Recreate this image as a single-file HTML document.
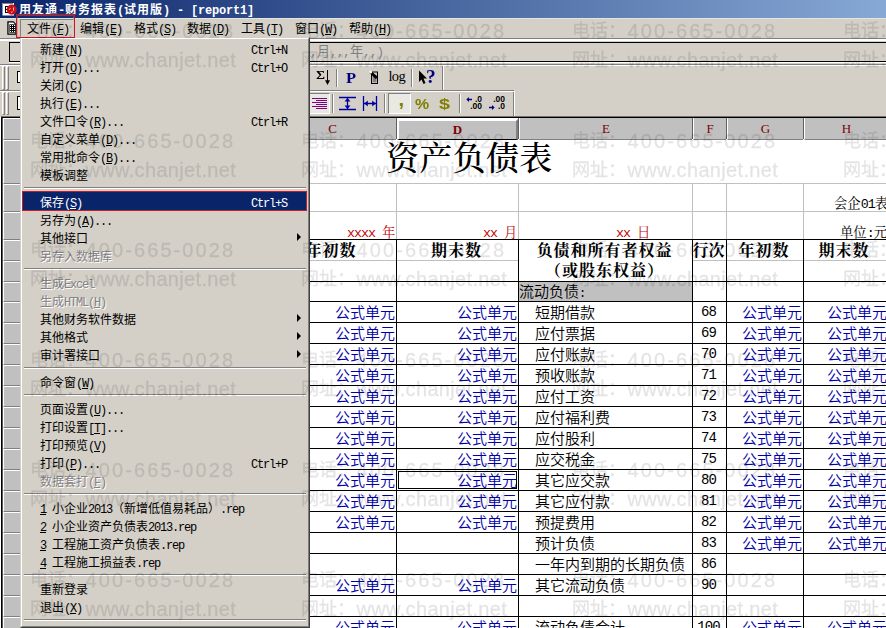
<!DOCTYPE html>
<html lang="zh-CN"><head><meta charset="utf-8"><title>用友通-财务报表</title>
<style>
*{box-sizing:border-box;margin:0;padding:0}
html,body{width:886px;height:628px;overflow:hidden;background:#d4d0c8}
body{position:relative;font-family:"Liberation Sans","Noto Sans CJK SC",sans-serif;font-size:12px;color:#000;line-height:1}
.abs,.abs *{position:absolute}
div{position:absolute;white-space:nowrap}
span{position:static}
.a{font-family:"Liberation Mono","Noto Sans CJK SC",monospace;letter-spacing:-1.2px;font-size:12px}
.u{text-decoration:underline}
#title{left:0;top:0;width:886px;height:18px;background:linear-gradient(90deg,#0a246a 0px,#a6caf0 1107px)}
#title .t{left:19px;top:3px;color:#fff;font-weight:bold;font-size:12px;letter-spacing:1px;line-height:14px}
#title .t .a{letter-spacing:-0.2px;font-weight:bold}
#menubar{left:0;top:18px;width:886px;height:20px;background:#d4d0c8;border-top:1px solid #e6e4e0}
.mi{top:4px;height:14px;line-height:14px}
/* dropdown */
#dd{left:20px;top:37px;width:290px;height:591px;background:#d4d0c8;border:1px solid;border-color:#d4d0c8 #404040 #404040 #d4d0c8}
#dd .in{left:0;top:0;width:288px;height:589px;border:1px solid;border-color:#fff #808080 #808080 #fff}
.it{left:23px;width:283px;height:18px;line-height:18px}
.it .l{left:17px;top:2px}
.it .r{left:228px;top:2px}
.it .ar{left:274px;top:5px;width:0;height:0;border:4px solid transparent;border-left:4px solid #000;border-right:none}
.dis{color:#848284;text-shadow:1px 1px 0 #fff}
.sep{left:24px;width:282px;height:2px;border-top:1px solid #808080;border-bottom:1px solid #fff}
.hl{background:#0a246a;color:#fff;outline:1px solid #c41c2c}
/* sheet */
#sheet{left:0;top:117px;width:886px;height:511px;background:#fff}
.ch{top:118px;height:22px;background:#c0c0c0;border-left:1px solid #fff;border-bottom:1px solid #808080;color:#800000;font-family:"Liberation Serif",serif;font-size:13px;text-align:center;line-height:21px}
.chs{background:#606060;top:118px;width:1px;height:21px}
.rh{left:3px;width:24px;background:#c0c0c0;border:1px solid;border-color:#fff #808080 #808080 #fff}
.gl{background:#c0c0c0}
.bl{background:#000}
.cell{font-size:15px;line-height:21px;height:21px;font-family:"Liberation Sans","Noto Sans CJK SC",sans-serif;font-weight:350}
.f{color:#0000a8;text-align:right}
.n{font-family:"Liberation Mono",monospace;font-size:14px;letter-spacing:-0.9px;text-align:center;font-weight:400}
.hd{font-family:"Liberation Serif","Noto Serif CJK SC",serif;font-weight:bold;font-size:16px;line-height:21px;height:21px;text-align:center;letter-spacing:1px;margin-left:-1px}
.sm{font-family:"Liberation Serif","Noto Serif CJK SC",serif;font-size:13.33px;line-height:16px}
.sm .a{font-size:13.33px;letter-spacing:-1.0px}
.fx .a{font-size:12px;letter-spacing:-0.53px}
.red{color:#c00808}
.wm{font-family:"Liberation Sans","Noto Sans CJK SC",sans-serif;font-size:18px;line-height:20px;color:#000;-webkit-text-stroke:0.35px #000;opacity:0.105}
.wm span{position:absolute;left:55.5px;top:0;font-size:20px}
.w1{letter-spacing:2.1px}.w2{letter-spacing:0.33px}
</style></head>
<body>
<div id="sheet"></div>
<div class="bl" style="left:1px;top:116px;width:885px;height:1px;background:#77746f"></div>
<div class="bl" style="left:1px;top:117px;width:885px;height:1px;background:#000"></div>
<div class="bl" style="left:1px;top:117px;width:1px;height:511px"></div>
<div class="bl" style="left:2px;top:118px;width:1px;height:510px;background:#5a5a5a"></div>
<div class="rh" style="top:118px;height:22px"></div>
<div class="rh" style="top:140px;height:44px"></div>
<div class="rh" style="top:184px;height:28px"></div>
<div class="rh" style="top:212px;height:28px"></div>
<div class="rh" style="top:240px;height:21px"></div>
<div class="rh" style="top:261px;height:21px"></div>
<div class="rh" style="top:282px;height:20px"></div>
<div class="rh" style="top:302px;height:21px"></div>
<div class="rh" style="top:323px;height:21px"></div>
<div class="rh" style="top:344px;height:21px"></div>
<div class="rh" style="top:365px;height:21px"></div>
<div class="rh" style="top:386px;height:21px"></div>
<div class="rh" style="top:407px;height:21px"></div>
<div class="rh" style="top:428px;height:21px"></div>
<div class="rh" style="top:449px;height:21px"></div>
<div class="rh" style="top:470px;height:21px"></div>
<div class="rh" style="top:491px;height:21px"></div>
<div class="rh" style="top:512px;height:21px"></div>
<div class="rh" style="top:533px;height:21px"></div>
<div class="rh" style="top:554px;height:21px"></div>
<div class="rh" style="top:575px;height:21px"></div>
<div class="rh" style="top:596px;height:21px"></div>
<div class="rh" style="top:617px;height:21px"></div>
<div class="ch" style="left:268px;width:128px">C</div>
<div class="chs" style="left:396px"></div>
<div class="ch" style="left:397px;width:121px;font-weight:bold;border-left:2px solid #fff;border-top:2px solid #fff;border-right:2px solid #808080;border-bottom:1px solid #000;line-height:18px;top:119px;height:21px">D</div>
<div class="chs" style="left:518px"></div>
<div class="ch" style="left:519px;width:173px">E</div>
<div class="chs" style="left:692px"></div>
<div class="ch" style="left:693px;width:33px">F</div>
<div class="chs" style="left:726px"></div>
<div class="ch" style="left:727px;width:76px">G</div>
<div class="chs" style="left:803px"></div>
<div class="ch" style="left:804px;width:84px">H</div>
<div class="chs" style="left:888px"></div>
<div class="gl" style="left:309px;top:183px;width:577px;height:1px"></div>
<div class="gl" style="left:309px;top:211px;width:577px;height:1px"></div>
<div class="gl" style="left:396px;top:184px;width:1px;height:56px"></div>
<div class="gl" style="left:518px;top:184px;width:1px;height:56px"></div>
<div class="gl" style="left:692px;top:184px;width:1px;height:56px"></div>
<div class="gl" style="left:726px;top:184px;width:1px;height:56px"></div>
<div class="gl" style="left:803px;top:184px;width:1px;height:56px"></div>
<div class="gl" style="left:309px;top:260px;width:209px;height:1px"></div>
<div class="gl" style="left:692px;top:260px;width:194px;height:1px"></div>
<div style="left:519px;top:282px;width:173px;height:19px;background:#c0c0c0"></div>
<div class="bl" style="left:309px;top:239px;width:577px;height:1px"></div>
<div class="bl" style="left:309px;top:281px;width:577px;height:1px"></div>
<div class="bl" style="left:309px;top:301px;width:577px;height:1px"></div>
<div class="bl" style="left:309px;top:322px;width:577px;height:1px"></div>
<div class="bl" style="left:309px;top:343px;width:577px;height:1px"></div>
<div class="bl" style="left:309px;top:364px;width:577px;height:1px"></div>
<div class="bl" style="left:309px;top:385px;width:577px;height:1px"></div>
<div class="bl" style="left:309px;top:406px;width:577px;height:1px"></div>
<div class="bl" style="left:309px;top:427px;width:577px;height:1px"></div>
<div class="bl" style="left:309px;top:448px;width:577px;height:1px"></div>
<div class="bl" style="left:309px;top:469px;width:577px;height:1px"></div>
<div class="bl" style="left:309px;top:490px;width:577px;height:1px"></div>
<div class="bl" style="left:309px;top:511px;width:577px;height:1px"></div>
<div class="bl" style="left:309px;top:532px;width:577px;height:1px"></div>
<div class="bl" style="left:309px;top:553px;width:577px;height:1px"></div>
<div class="bl" style="left:309px;top:574px;width:577px;height:1px"></div>
<div class="bl" style="left:309px;top:595px;width:577px;height:1px"></div>
<div class="bl" style="left:309px;top:616px;width:577px;height:1px"></div>
<div class="bl" style="left:309px;top:637px;width:577px;height:1px"></div>
<div class="bl" style="left:396px;top:239px;width:1px;height:389px"></div>
<div class="bl" style="left:518px;top:239px;width:1px;height:389px"></div>
<div class="bl" style="left:692px;top:239px;width:1px;height:389px"></div>
<div class="bl" style="left:726px;top:239px;width:1px;height:389px"></div>
<div class="bl" style="left:803px;top:239px;width:1px;height:389px"></div>
<div style="left:386px;top:139px;font-family:'Liberation Serif','Noto Serif CJK SC',serif;font-size:33px;line-height:40px;font-weight:500;letter-spacing:0.3px">资产负债表</div>
<div class="sm" style="left:834px;top:196px">会企<span class="a">01</span>表</div>
<div class="sm" style="left:840px;top:225px">单位<span class="a">:</span>元</div>
<div class="sm red" style="left:347px;top:225px"><span class="a">xxxx </span>年</div>
<div class="sm red" style="left:483px;top:225px"><span class="a">xx </span>月</div>
<div class="sm red" style="left:616px;top:225px"><span class="a">xx </span>日</div>
<div class="hd" style="left:268px;top:240px;width:128px">年初数</div>
<div class="hd" style="left:397px;top:240px;width:121px">期末数</div>
<div class="hd" style="left:519px;top:240px;width:173px">负债和所有者权益</div>
<div class="hd" style="left:519px;top:260px;width:173px">（或股东权益）</div>
<div class="hd" style="left:692px;top:240px;width:35px;letter-spacing:0">行次</div>
<div class="hd" style="left:727px;top:240px;width:76px">年初数</div>
<div class="hd" style="left:804px;top:240px;width:82px">期末数</div>
<div class="cell" style="left:519px;top:281px">流动负债<span class="a">:</span></div>
<div class="cell" style="left:535px;top:302px">短期借款</div>
<div class="cell n" style="left:692px;top:302px;width:33px">68</div>
<div class="cell f" style="left:310px;top:302px;width:85px">公式单元</div>
<div class="cell f" style="left:397px;top:302px;width:120px">公式单元</div>
<div class="cell f" style="left:727px;top:302px;width:75px">公式单元</div>
<div class="cell f" style="left:827px;top:302px;width:60px;text-align:left">公式单元</div>
<div class="cell" style="left:535px;top:323px">应付票据</div>
<div class="cell n" style="left:692px;top:323px;width:33px">69</div>
<div class="cell f" style="left:310px;top:323px;width:85px">公式单元</div>
<div class="cell f" style="left:397px;top:323px;width:120px">公式单元</div>
<div class="cell f" style="left:727px;top:323px;width:75px">公式单元</div>
<div class="cell f" style="left:827px;top:323px;width:60px;text-align:left">公式单元</div>
<div class="cell" style="left:535px;top:344px">应付账款</div>
<div class="cell n" style="left:692px;top:344px;width:33px">70</div>
<div class="cell f" style="left:310px;top:344px;width:85px">公式单元</div>
<div class="cell f" style="left:397px;top:344px;width:120px">公式单元</div>
<div class="cell f" style="left:727px;top:344px;width:75px">公式单元</div>
<div class="cell f" style="left:827px;top:344px;width:60px;text-align:left">公式单元</div>
<div class="cell" style="left:535px;top:365px">预收账款</div>
<div class="cell n" style="left:692px;top:365px;width:33px">71</div>
<div class="cell f" style="left:310px;top:365px;width:85px">公式单元</div>
<div class="cell f" style="left:397px;top:365px;width:120px">公式单元</div>
<div class="cell f" style="left:727px;top:365px;width:75px">公式单元</div>
<div class="cell f" style="left:827px;top:365px;width:60px;text-align:left">公式单元</div>
<div class="cell" style="left:535px;top:386px">应付工资</div>
<div class="cell n" style="left:692px;top:386px;width:33px">72</div>
<div class="cell f" style="left:310px;top:386px;width:85px">公式单元</div>
<div class="cell f" style="left:397px;top:386px;width:120px">公式单元</div>
<div class="cell f" style="left:727px;top:386px;width:75px">公式单元</div>
<div class="cell f" style="left:827px;top:386px;width:60px;text-align:left">公式单元</div>
<div class="cell" style="left:535px;top:407px">应付福利费</div>
<div class="cell n" style="left:692px;top:407px;width:33px">73</div>
<div class="cell f" style="left:310px;top:407px;width:85px">公式单元</div>
<div class="cell f" style="left:397px;top:407px;width:120px">公式单元</div>
<div class="cell f" style="left:727px;top:407px;width:75px">公式单元</div>
<div class="cell f" style="left:827px;top:407px;width:60px;text-align:left">公式单元</div>
<div class="cell" style="left:535px;top:428px">应付股利</div>
<div class="cell n" style="left:692px;top:428px;width:33px">74</div>
<div class="cell f" style="left:310px;top:428px;width:85px">公式单元</div>
<div class="cell f" style="left:397px;top:428px;width:120px">公式单元</div>
<div class="cell f" style="left:727px;top:428px;width:75px">公式单元</div>
<div class="cell f" style="left:827px;top:428px;width:60px;text-align:left">公式单元</div>
<div class="cell" style="left:535px;top:449px">应交税金</div>
<div class="cell n" style="left:692px;top:449px;width:33px">75</div>
<div class="cell f" style="left:310px;top:449px;width:85px">公式单元</div>
<div class="cell f" style="left:397px;top:449px;width:120px">公式单元</div>
<div class="cell f" style="left:727px;top:449px;width:75px">公式单元</div>
<div class="cell f" style="left:827px;top:449px;width:60px;text-align:left">公式单元</div>
<div class="cell" style="left:535px;top:470px">其它应交款</div>
<div class="cell n" style="left:692px;top:470px;width:33px">80</div>
<div class="cell f" style="left:310px;top:470px;width:85px">公式单元</div>
<div class="cell f" style="left:397px;top:470px;width:120px">公式单元</div>
<div class="cell f" style="left:727px;top:470px;width:75px">公式单元</div>
<div class="cell f" style="left:827px;top:470px;width:60px;text-align:left">公式单元</div>
<div class="cell" style="left:535px;top:491px">其它应付款</div>
<div class="cell n" style="left:692px;top:491px;width:33px">81</div>
<div class="cell f" style="left:310px;top:491px;width:85px">公式单元</div>
<div class="cell f" style="left:397px;top:491px;width:120px">公式单元</div>
<div class="cell f" style="left:727px;top:491px;width:75px">公式单元</div>
<div class="cell f" style="left:827px;top:491px;width:60px;text-align:left">公式单元</div>
<div class="cell" style="left:535px;top:512px">预提费用</div>
<div class="cell n" style="left:692px;top:512px;width:33px">82</div>
<div class="cell f" style="left:310px;top:512px;width:85px">公式单元</div>
<div class="cell f" style="left:397px;top:512px;width:120px">公式单元</div>
<div class="cell f" style="left:727px;top:512px;width:75px">公式单元</div>
<div class="cell f" style="left:827px;top:512px;width:60px;text-align:left">公式单元</div>
<div class="cell" style="left:535px;top:533px">预计负债</div>
<div class="cell n" style="left:692px;top:533px;width:33px">83</div>
<div class="cell f" style="left:727px;top:533px;width:75px">公式单元</div>
<div class="cell f" style="left:827px;top:533px;width:60px;text-align:left">公式单元</div>
<div class="cell" style="left:535px;top:554px">一年内到期的长期负债</div>
<div class="cell n" style="left:692px;top:554px;width:33px">86</div>
<div class="cell" style="left:535px;top:575px">其它流动负债</div>
<div class="cell n" style="left:692px;top:575px;width:33px">90</div>
<div class="cell f" style="left:310px;top:575px;width:85px">公式单元</div>
<div class="cell f" style="left:397px;top:575px;width:120px">公式单元</div>
<div class="cell" style="left:535px;top:617px">流动负债合计</div>
<div class="cell n" style="left:692px;top:617px;width:33px">100</div>
<div class="cell f" style="left:310px;top:617px;width:85px">公式单元</div>
<div class="cell f" style="left:397px;top:617px;width:120px">公式单元</div>
<div class="cell f" style="left:727px;top:617px;width:75px">公式单元</div>
<div class="cell f" style="left:827px;top:617px;width:60px;text-align:left">公式单元</div>
<div style="left:398px;top:471px;width:119px;height:18px;border:1px solid #000"></div>
<div id="title"><div class="t">用友通<span class="a">-</span>财务报表<span class="a">(</span>试用版<span class="a">) - [report1]</span></div></div>
<svg style="position:absolute;left:0px;top:0px" width="19" height="18" viewBox="0 0 19 18"><rect x="2.5" y="3" width="11.5" height="12.5" fill="#fff"/><path d="M3.5 3.5h1M5.5 3.5h1M7.5 3.5h1M9.5 3.5h1M11.5 3.5h1" stroke="#000" stroke-width="1"/><path d="M5 6h3v1h-2v2h1.5v1h-1.5v2h2v1h-3z" fill="#000"/><circle cx="11.8" cy="9.6" r="5.1" fill="#cc1018"/><path d="M9 9.5l1.5-1M13.5 7.5v3M11 12.5l1.5-0.8" stroke="#fff" stroke-width="0.9" fill="none" opacity="0.85"/></svg>
<div id="menubar"></div>
<svg style="position:absolute;left:7px;top:21px" width="10" height="14" viewBox="0 0 10 14"><path d="M0.3 0.3h6.2l3 3v10.4h-9.2z" fill="#000"/><path d="M1.6 1.4h4.6l2.2 2.2v8.9h-6.8z" fill="#fff"/><rect x="2.4" y="3.3" width="6.2" height="8.4" fill="#000"/><g fill="#fff"><rect x="3" y="4" width="1" height="1"/><rect x="5" y="4" width="1" height="1"/><rect x="7" y="4" width="1" height="1"/><rect x="3" y="6" width="1" height="1"/><rect x="5" y="6" width="1" height="1"/><rect x="7" y="6" width="1" height="1"/><rect x="3" y="8" width="1" height="1"/><rect x="5" y="8" width="1" height="1"/><rect x="7" y="8" width="1" height="1"/><rect x="3" y="10" width="1" height="1"/><rect x="5" y="10" width="1" height="1"/><rect x="7" y="10" width="1" height="1"/></g></svg>
<div class="mi" style="left:27px;top:22px">文件<span class="a">(<span class="u">F</span>)</span></div>
<div class="mi" style="left:80px;top:22px">编辑<span class="a">(<span class="u">E</span>)</span></div>
<div class="mi" style="left:134px;top:22px">格式<span class="a">(<span class="u">S</span>)</span></div>
<div class="mi" style="left:187px;top:22px">数据<span class="a">(<span class="u">D</span>)</span></div>
<div class="mi" style="left:241px;top:22px">工具<span class="a">(<span class="u">T</span>)</span></div>
<div class="mi" style="left:295px;top:22px">窗口<span class="a">(<span class="u">W</span>)</span></div>
<div class="mi" style="left:349px;top:22px">帮助<span class="a">(<span class="u">H</span>)</span></div>
<div style="left:20px;top:19px;width:54px;height:18px;border:1px solid;border-color:#808080 #fff #fff #808080"></div>
<div style="left:0;top:38px;width:886px;height:1px;background:#808080"></div>
<div style="left:0;top:39px;width:886px;height:2px;background:#fff"></div>
<div style="left:9px;top:42px;width:877px;height:1px;background:#000"></div>
<div style="left:9px;top:61px;width:877px;height:1px;background:#000"></div>
<div style="left:9px;top:62px;width:877px;height:1px;background:#fff"></div>
<div style="left:0;top:64px;width:886px;height:1px;background:#808080"></div>
<div style="left:0;top:65px;width:886px;height:1px;background:#fff"></div>
<div style="left:9px;top:42px;width:1px;height:20px;background:#000"></div>
<div class="fx" style="left:310px;top:45px;color:#808080;font-size:13.33px;line-height:14px"><span class="a">,</span>月<span class="a">,,,</span>年<span class="a">,,)</span></div>
<div style="left:2px;top:66px;width:3px;height:24px;border:1px solid;border-color:#fff #808080 #808080 #fff"></div>
<div style="left:6px;top:66px;width:3px;height:24px;border:1px solid;border-color:#fff #808080 #808080 #fff"></div>
<div style="left:2px;top:92px;width:3px;height:23px;border:1px solid;border-color:#fff #808080 #808080 #fff"></div>
<div style="left:6px;top:92px;width:3px;height:23px;border:1px solid;border-color:#fff #808080 #808080 #fff"></div>
<div style="left:0;top:91px;width:515px;height:1px;background:#fff"></div>
<div style="left:0;top:90px;width:514px;height:1px;background:#808080"></div>
<div style="left:17px;top:71px;width:10px;height:12px;background:#fff;border:1px solid #000"></div>
<div style="left:17px;top:96px;width:10px;height:14px;background:#fff;border:1px solid #000"></div>
<div style="left:442px;top:66px;width:1px;height:24px;background:#808080"></div>
<div style="left:443px;top:66px;width:1px;height:24px;background:#fff"></div>
<div style="left:513px;top:92px;width:1px;height:24px;background:#808080"></div>
<div style="left:514px;top:92px;width:1px;height:24px;background:#fff"></div>
<div style="left:336px;top:69px;width:1px;height:18px;background:#808080"></div>
<div style="left:337px;top:69px;width:1px;height:18px;background:#fff"></div>
<div style="left:411px;top:69px;width:1px;height:18px;background:#808080"></div>
<div style="left:412px;top:69px;width:1px;height:18px;background:#fff"></div>
<div style="left:332px;top:94px;width:1px;height:19px;background:#808080"></div>
<div style="left:333px;top:94px;width:1px;height:19px;background:#fff"></div>
<div style="left:384px;top:94px;width:1px;height:19px;background:#808080"></div>
<div style="left:385px;top:94px;width:1px;height:19px;background:#fff"></div>
<div style="left:459px;top:94px;width:1px;height:19px;background:#808080"></div>
<div style="left:460px;top:94px;width:1px;height:19px;background:#fff"></div>
<div style="left:309px;top:93px;width:21px;height:21px;background:#eae8e3;border:1px solid;border-color:#808080 #fff #fff #808080"></div>
<div style="left:388px;top:93px;width:23px;height:21px;background:#eae8e3;border:1px solid;border-color:#808080 #fff #fff #808080"></div>
<div style="left:316px;top:66px;font-size:12.5px;line-height:18px;font-family:'Liberation Serif',serif;transform-origin:0 0;transform:scaleX(1.22);text-shadow:0.3px 0 0 #000">Σ</div>
<svg style="position:absolute;left:324px;top:70px" width="8" height="16" viewBox="0 0 8 16"><path d="M3.5 0v11" stroke="#000" stroke-width="1"/><path d="M1 10.3h5l-2.5 4.7z" fill="#000"/></svg>
<div style="left:346px;top:70px;font-size:14px;line-height:18px;font-weight:bold;color:#000080;font-family:'Liberation Serif',serif;transform-origin:0 0;transform:scaleX(1.18)">P</div>
<svg style="position:absolute;left:367px;top:69px" width="13" height="16" viewBox="0 0 13 16"><rect x="4.5" y="3" width="6" height="11.5" fill="#d4d0c8" stroke="#000"/><rect x="5.5" y="5.8" width="4" height="7.5" fill="#808080"/><path d="M2 3.6L4 1.8L10.5 7.8L9 10.2Z" fill="#000"/><circle cx="3.6" cy="2.9" r="1.5" fill="#fff"/></svg>
<div style="left:388.5px;top:67px;font-size:14.5px;line-height:18px;letter-spacing:-0.7px;font-family:'Liberation Serif',serif">log</div>
<svg style="position:absolute;left:418px;top:70px" width="10" height="15" viewBox="0 0 10 15"><path d="M1 0.5v11.5l2.5-2.5 2 4.5 2-1-2-4.5h3.5z" fill="#000"/></svg>
<div style="left:426px;top:68px;font-size:18px;line-height:18px;font-weight:bold;color:#000080;font-family:'Liberation Serif',serif;transform-origin:0 0;transform:scaleX(1.08)">?</div>
<svg style="position:absolute;left:311px;top:97px" width="17" height="14" viewBox="0 0 17 14"><path d="M1 1.5h15M5 3.5h11M1 5.5h15M5 7.5h11M1 9.5h15M5 11.5h11" stroke="#800080" stroke-width="1"/></svg>
<svg style="position:absolute;left:339px;top:96px" width="17" height="15" viewBox="0 0 17 15"><path d="M0 1.5h17M0 13.5h17M8.5 2v11" stroke="#0000a0" stroke-width="1.3" fill="none"/><path d="M8.5 2l-3 3.5h6zM8.5 13l-3-3.5h6z" fill="#0000a0"/></svg>
<svg style="position:absolute;left:362px;top:96px" width="17" height="15" viewBox="0 0 17 15"><path d="M1.5 0v15M14.5 0v15M2 7.5h12" stroke="#0000a0" stroke-width="1.3" fill="none"/><path d="M2.3 7.5l3.5-3v6zM13.7 7.5l-3.5-3v6z" fill="#0000a0"/></svg>
<div style="left:398.5px;top:89px;font-size:20px;line-height:20px;font-weight:bold;color:#808000;font-family:'Liberation Sans',sans-serif">,</div>
<div style="left:414.5px;top:95px;font-size:15px;line-height:18px;font-weight:bold;color:#808000;font-family:'Liberation Sans',sans-serif;transform-origin:0 0;transform:scaleX(1.06)">%</div>
<div style="left:439px;top:95px;font-size:15px;line-height:18px;font-weight:bold;color:#808000;font-family:'Liberation Sans',sans-serif;transform-origin:0 0;transform:scaleX(1.32)">$</div>
<div style="left:466px;top:96px;font-size:8.5px;line-height:7px;font-weight:bold;font-family:'Liberation Sans',sans-serif;text-align:right;width:16px">.0</div>
<div style="left:466px;top:103px;font-size:8.5px;line-height:7px;font-weight:bold;font-family:'Liberation Sans',sans-serif;text-align:right;width:16px">.00</div>
<svg style="position:absolute;left:466px;top:97px" width="7" height="5" viewBox="0 0 7 5"><path d="M0.3 2.5L3 0v5zM3 1.7h3v1.6h-3z" fill="#000080"/></svg>
<div style="left:489px;top:96px;font-size:8.5px;line-height:7px;font-weight:bold;font-family:'Liberation Sans',sans-serif;text-align:right;width:16px">.00</div>
<div style="left:489px;top:103px;font-size:8.5px;line-height:7px;font-weight:bold;font-family:'Liberation Sans',sans-serif;text-align:right;width:16px">.0</div>
<svg style="position:absolute;left:489px;top:104.5px" width="7" height="5" viewBox="0 0 7 5"><path d="M5.7 2.5L3 0v5zM0 1.7h3v1.6h-3z" fill="#000080"/></svg>
<div id="dd"><div class="in"></div></div>
<div class="it" style="top:39px"><div class="l">新建<span class="a">(<span class="u">N</span>)</span></div><div class="r"><span class="a">Ctrl+N</span></div></div>
<div class="it" style="top:57px"><div class="l">打开<span class="a">(<span class="u">O</span>)<span style="letter-spacing:-1.2px">...</span></span></div><div class="r"><span class="a">Ctrl+O</span></div></div>
<div class="it" style="top:75px"><div class="l">关闭<span class="a">(<span class="u">C</span>)</span></div></div>
<div class="it" style="top:93px"><div class="l">执行<span class="a">(<span class="u">E</span>)<span style="letter-spacing:-1.2px">...</span></span></div></div>
<div class="it" style="top:111px"><div class="l">文件口令<span class="a">(<span class="u">R</span>)<span style="letter-spacing:-1.2px">...</span></span></div><div class="r"><span class="a">Ctrl+R</span></div></div>
<div class="it" style="top:129px"><div class="l">自定义菜单<span class="a">(<span class="u">D</span>)<span style="letter-spacing:-1.2px">...</span></span></div></div>
<div class="it" style="top:147px"><div class="l">常用批命令<span class="a">(<span class="u">B</span>)<span style="letter-spacing:-1.2px">...</span></span></div></div>
<div class="it" style="top:165px"><div class="l">模板调整</div></div>
<div class="sep" style="top:187px"></div>
<div class="it hl" style="top:192px"><div class="l">保存<span class="a">(<span class="u">S</span>)</span></div><div class="r"><span class="a">Ctrl+S</span></div></div>
<div class="it" style="top:210px"><div class="l">另存为<span class="a">(<span class="u">A</span>)<span style="letter-spacing:-1.2px">...</span></span></div></div>
<div class="it" style="top:228px"><div class="l">其他接口</div><div class="ar"></div></div>
<div class="it dis" style="top:246px"><div class="l">另存入数据库</div></div>
<div class="sep" style="top:268px"></div>
<div class="it dis" style="top:273px"><div class="l">生成<span class="a">Excel</span></div></div>
<div class="it dis" style="top:291px"><div class="l">生成<span class="a">HTML</span><span class="a">(<span class="u">H</span>)</span></div></div>
<div class="it" style="top:309px"><div class="l">其他财务软件数据</div><div class="ar"></div></div>
<div class="it" style="top:327px"><div class="l">其他格式</div><div class="ar"></div></div>
<div class="it" style="top:345px"><div class="l">审计署接口</div><div class="ar"></div></div>
<div class="sep" style="top:367px"></div>
<div class="it" style="top:372px"><div class="l">命令窗<span class="a">(<span class="u">W</span>)</span></div></div>
<div class="sep" style="top:394px"></div>
<div class="it" style="top:399px"><div class="l">页面设置<span class="a">(<span class="u">U</span>)<span style="letter-spacing:-1.2px">...</span></span></div></div>
<div class="it" style="top:417px"><div class="l">打印设置<span class="a">[<span class="u">T</span>]<span style="letter-spacing:-1.2px">...</span></span></div></div>
<div class="it" style="top:435px"><div class="l">打印预览<span class="a">(<span class="u">V</span>)</span></div></div>
<div class="it" style="top:453px"><div class="l">打印<span class="a">(<span class="u">P</span>)<span style="letter-spacing:-1.2px">...</span></span></div><div class="r"><span class="a">Ctrl+P</span></div></div>
<div class="it dis" style="top:471px"><div class="l">数据套打<span class="a">(<span class="u">F</span>)</span></div></div>
<div class="sep" style="top:493px"></div>
<div class="it" style="top:498px"><div class="l"><span class="a u">1</span><span class="a"> </span>小企业<span class="a">2013</span>（新增低值易耗品）<span class="a">.rep</span></div></div>
<div class="it" style="top:516px"><div class="l"><span class="a u">2</span><span class="a"> </span>小企业资产负债表<span class="a">2013.rep</span></div></div>
<div class="it" style="top:534px"><div class="l"><span class="a u">3</span><span class="a"> </span>工程施工资产负债表<span class="a">.rep</span></div></div>
<div class="it" style="top:552px"><div class="l"><span class="a u">4</span><span class="a"> </span>工程施工损益表<span class="a">.rep</span></div></div>
<div class="sep" style="top:574px"></div>
<div class="it" style="top:579px"><div class="l">重新登录</div></div>
<div class="it" style="top:597px"><div class="l">退出<span class="a">(<span class="u">X</span>)</span></div></div>
<div class="sep" style="top:619px"></div>
<div style="left:16px;top:14px;width:59px;height:24px;border:1px solid #b81c24;box-shadow:inset 0 0 0 1px rgba(220,90,90,0.4)"></div>
<div class="wm" style="left:30px;top:21px">电话：<span class="w1">400-665-0028</span></div>
<div class="wm" style="left:30px;top:50px">网址：<span class="w2">www.chanjet.net</span></div>
<div class="wm" style="left:301px;top:21px">电话：<span class="w1">400-665-0028</span></div>
<div class="wm" style="left:301px;top:50px">网址：<span class="w2">www.chanjet.net</span></div>
<div class="wm" style="left:572px;top:21px">电话：<span class="w1">400-665-0028</span></div>
<div class="wm" style="left:572px;top:50px">网址：<span class="w2">www.chanjet.net</span></div>
<div class="wm" style="left:843px;top:21px">电话：<span class="w1">400-665-0028</span></div>
<div class="wm" style="left:843px;top:50px">网址：<span class="w2">www.chanjet.net</span></div>
<div class="wm" style="left:30px;top:131px">电话：<span class="w1">400-665-0028</span></div>
<div class="wm" style="left:30px;top:160px">网址：<span class="w2">www.chanjet.net</span></div>
<div class="wm" style="left:301px;top:131px">电话：<span class="w1">400-665-0028</span></div>
<div class="wm" style="left:301px;top:160px">网址：<span class="w2">www.chanjet.net</span></div>
<div class="wm" style="left:572px;top:131px">电话：<span class="w1">400-665-0028</span></div>
<div class="wm" style="left:572px;top:160px">网址：<span class="w2">www.chanjet.net</span></div>
<div class="wm" style="left:843px;top:131px">电话：<span class="w1">400-665-0028</span></div>
<div class="wm" style="left:843px;top:160px">网址：<span class="w2">www.chanjet.net</span></div>
<div class="wm" style="left:30px;top:240px">电话：<span class="w1">400-665-0028</span></div>
<div class="wm" style="left:30px;top:269px">网址：<span class="w2">www.chanjet.net</span></div>
<div class="wm" style="left:301px;top:240px">电话：<span class="w1">400-665-0028</span></div>
<div class="wm" style="left:301px;top:269px">网址：<span class="w2">www.chanjet.net</span></div>
<div class="wm" style="left:572px;top:240px">电话：<span class="w1">400-665-0028</span></div>
<div class="wm" style="left:572px;top:269px">网址：<span class="w2">www.chanjet.net</span></div>
<div class="wm" style="left:843px;top:240px">电话：<span class="w1">400-665-0028</span></div>
<div class="wm" style="left:843px;top:269px">网址：<span class="w2">www.chanjet.net</span></div>
<div class="wm" style="left:30px;top:350px">电话：<span class="w1">400-665-0028</span></div>
<div class="wm" style="left:30px;top:379px">网址：<span class="w2">www.chanjet.net</span></div>
<div class="wm" style="left:301px;top:350px">电话：<span class="w1">400-665-0028</span></div>
<div class="wm" style="left:301px;top:379px">网址：<span class="w2">www.chanjet.net</span></div>
<div class="wm" style="left:572px;top:350px">电话：<span class="w1">400-665-0028</span></div>
<div class="wm" style="left:572px;top:379px">网址：<span class="w2">www.chanjet.net</span></div>
<div class="wm" style="left:843px;top:350px">电话：<span class="w1">400-665-0028</span></div>
<div class="wm" style="left:843px;top:379px">网址：<span class="w2">www.chanjet.net</span></div>
<div class="wm" style="left:30px;top:460px">电话：<span class="w1">400-665-0028</span></div>
<div class="wm" style="left:30px;top:489px">网址：<span class="w2">www.chanjet.net</span></div>
<div class="wm" style="left:301px;top:460px">电话：<span class="w1">400-665-0028</span></div>
<div class="wm" style="left:301px;top:489px">网址：<span class="w2">www.chanjet.net</span></div>
<div class="wm" style="left:572px;top:460px">电话：<span class="w1">400-665-0028</span></div>
<div class="wm" style="left:572px;top:489px">网址：<span class="w2">www.chanjet.net</span></div>
<div class="wm" style="left:843px;top:460px">电话：<span class="w1">400-665-0028</span></div>
<div class="wm" style="left:843px;top:489px">网址：<span class="w2">www.chanjet.net</span></div>
<div class="wm" style="left:30px;top:570px">电话：<span class="w1">400-665-0028</span></div>
<div class="wm" style="left:30px;top:599px">网址：<span class="w2">www.chanjet.net</span></div>
<div class="wm" style="left:301px;top:570px">电话：<span class="w1">400-665-0028</span></div>
<div class="wm" style="left:301px;top:599px">网址：<span class="w2">www.chanjet.net</span></div>
<div class="wm" style="left:572px;top:570px">电话：<span class="w1">400-665-0028</span></div>
<div class="wm" style="left:572px;top:599px">网址：<span class="w2">www.chanjet.net</span></div>
<div class="wm" style="left:843px;top:570px">电话：<span class="w1">400-665-0028</span></div>
<div class="wm" style="left:843px;top:599px">网址：<span class="w2">www.chanjet.net</span></div>
</body></html>
